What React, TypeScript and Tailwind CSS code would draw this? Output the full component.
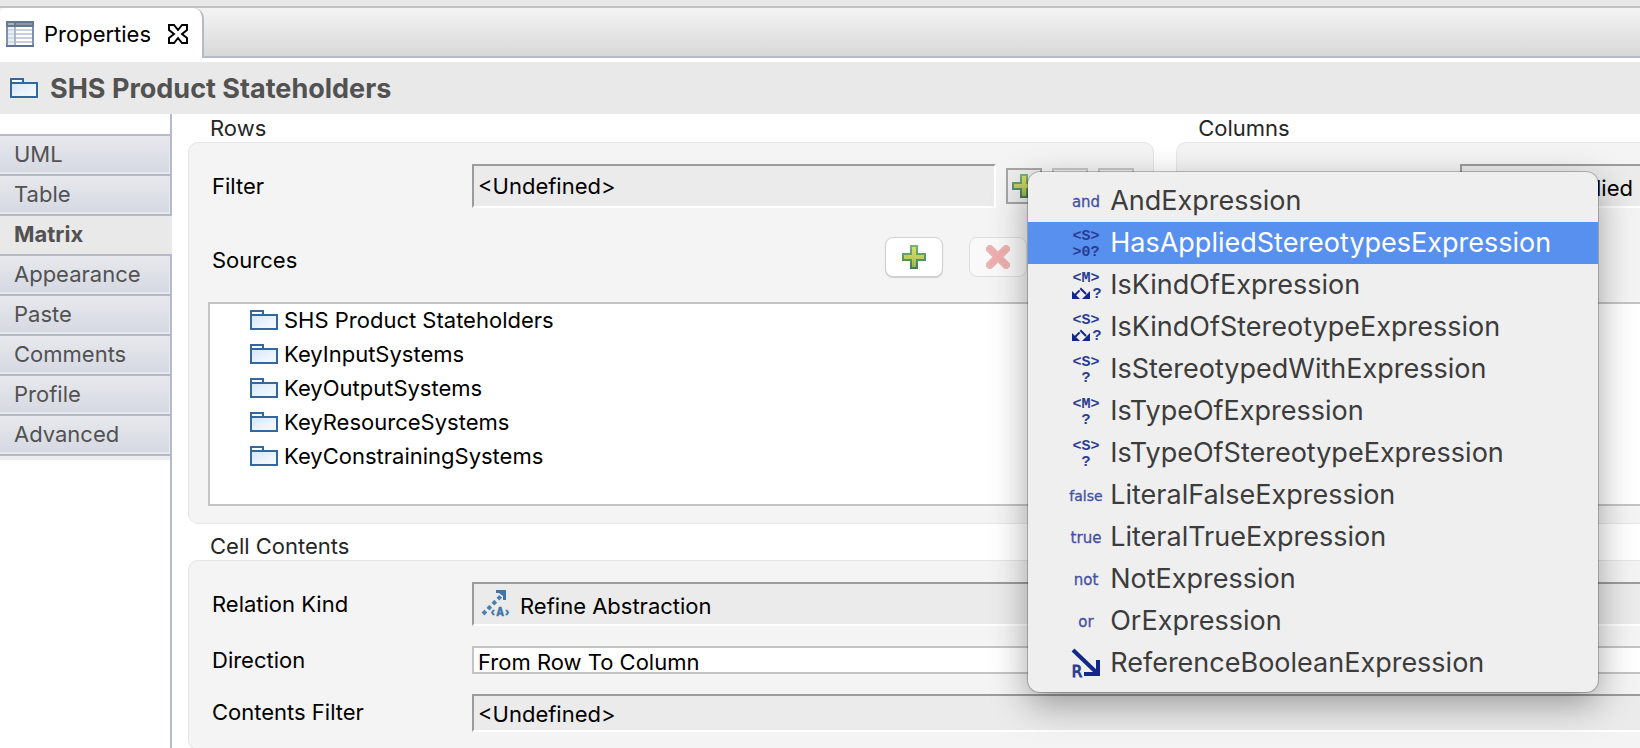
import React from "react";

const FolderIcon = () => (
  <svg width="28" height="20" viewBox="0 0 28 20" className="shrink-0" aria-hidden="true">
    <defs>
      <linearGradient id="folder" x1="0" y1="0" x2="1" y2="1">
        <stop offset="0" stopColor="#d3e6f4" />
        <stop offset="0.6" stopColor="#edf4fd" />
        <stop offset="1" stopColor="#f4f9ff" />
      </linearGradient>
    </defs>
    <path d="M1 5V1H13V5" fill="#fff" stroke="#31689f" strokeWidth="2" />
    <rect x="1" y="5" width="26" height="14" fill="url(#folder)" stroke="#31689f" strokeWidth="2" />
  </svg>
);

const PropertiesIcon = () => (
  <svg width="28" height="26" viewBox="0 0 28 26" className="shrink-0" aria-hidden="true">
    <rect x="1" y="1" width="26" height="24" fill="#fff" stroke="#8090ad" strokeWidth="2" />
    <rect x="0" y="0" width="28" height="6" fill="#66788f" />
    <rect x="2" y="2" width="6" height="2" fill="#a5b2c3" />
    <rect x="10" y="2" width="16" height="2" fill="#8496ad" />
    {[8, 12, 16, 20].map((y) => (
      <rect key={y} x="2" y={y} width="24" height="2" fill="#c9cfdc" />
    ))}
    <rect x="2" y="6" width="6" height="18" fill="#dbe2ec" fillOpacity="0.6" />
    <rect x="8" y="6" width="2" height="18" fill="#a9b6cc" />
    <rect x="0" y="24" width="28" height="2" fill="#5f7193" />
  </svg>
);

const CloseIcon = () => (
  <svg width="20" height="20" viewBox="0 0 20 20" aria-hidden="true">
    <path
      d="M1 1H6L10 6L14 1H19V6L14 10L19 14V19H14L10 14L6 19H1V14L6 10L1 6Z"
      fill="#fff"
      stroke="#000"
      strokeWidth="2"
    />
  </svg>
);

const PlusIcon = () => (
  <svg width="24" height="24" viewBox="0 0 24 24" aria-hidden="true">
    <defs>
      <linearGradient id="plusFill" x1="0" y1="0" x2="0" y2="1">
        <stop offset="0" stopColor="#d9dc6e" />
        <stop offset="0.5" stopColor="#c3cf5c" />
        <stop offset="1" stopColor="#8fb54e" />
      </linearGradient>
      <linearGradient id="plusEdge" x1="0" y1="0" x2="0" y2="1">
        <stop offset="0" stopColor="#72b576" />
        <stop offset="1" stopColor="#447a58" />
      </linearGradient>
    </defs>
    <path d="M9 1H15V9H23V15H15V23H9V15H1V9H9Z" fill="url(#plusFill)" stroke="url(#plusEdge)" strokeWidth="2" />
  </svg>
);

const DeleteIcon = () => (
  <svg width="24" height="24" viewBox="0 0 24 24" aria-hidden="true">
    <path d="M4 4L20 20M20 4L4 20" stroke="#eab4b4" strokeWidth="8" strokeLinecap="round" />
    <path d="M5 5L19 19M19 5L5 19" stroke="#efadad" strokeWidth="4" strokeLinecap="round" />
  </svg>
);

const RefineIcon = () => (
  <svg width="30" height="32" viewBox="0 0 30 32" className="shrink-0" aria-hidden="true">
    <path d="M3 26L22 7" stroke="#4a80b0" strokeWidth="4" strokeDasharray="4 3" strokeLinecap="butt" fill="none" />
    <path d="M16 2H26V12H23V8L19 5H16Z" fill="#3d76a8" />
    <text
      x="20"
      y="28"
      textAnchor="middle"
      fontFamily="Liberation Mono, monospace"
      fontWeight="700"
      fontSize="12"
      fill="#3d76a8"
      stroke="#3d76a8"
      strokeWidth="0.5"
    >
      ‹A›
    </text>
  </svg>
);

type Glyph = { top?: string; bottom?: string; word?: string; arrows?: boolean; reference?: boolean };

const mono = {
  textAnchor: "middle",
  fontFamily: "Liberation Mono, monospace",
  fontWeight: 700,
  fontSize: 15,
  fill: "#2a3c92",
} as const;

const ExpressionIcon = ({ top, bottom, word, arrows, reference }: Glyph) => (
  <svg width="34" height="36" viewBox="0 0 34 36" className="shrink-0 overflow-visible" aria-hidden="true">
    {word && (
      <text
        x="17"
        y="24"
        textAnchor="middle"
        fontFamily="DejaVu Sans, sans-serif"
        fontSize={word === "false" ? 14 : 15}
        fill="#4450a2"
        stroke="#4450a2"
        strokeWidth="0.3"
      >
        {word}
      </text>
    )}
    {top && (
      <text x="17" y="15" {...mono}>
        {top}
      </text>
    )}
    {bottom && (
      <text x={arrows ? 28 : 17} y="31" {...mono}>
        {bottom}
      </text>
    )}
    {arrows && (
      <g>
        <path d="M5 29L12 22L19 29" stroke="#14288a" strokeWidth="2" strokeDasharray="8 1" fill="none" />
        <path d="M3 24V32H11ZM21 24V32H13Z" fill="#14288a" />
      </g>
    )}
    {reference && (
      <g>
        <path d="M4 5L27 27" stroke="#14288a" strokeWidth="4" />
        <path d="M29 15V29H15" stroke="#14288a" strokeWidth="4" fill="none" />
        <text x="8" y="32" textAnchor="middle" fontFamily="DejaVu Sans, sans-serif" fontSize="15" fill="#2a3c92" stroke="#2a3c92" strokeWidth="1">
          R
        </text>
      </g>
    )}
  </svg>
);

const MENU: { label: string; icon: Glyph }[] = [
  { label: "AndExpression", icon: { word: "and" } },
  { label: "HasAppliedStereotypesExpression", icon: { top: "<S>", bottom: ">0?" } },
  { label: "IsKindOfExpression", icon: { top: "<M>", bottom: "?", arrows: true } },
  { label: "IsKindOfStereotypeExpression", icon: { top: "<S>", bottom: "?", arrows: true } },
  { label: "IsStereotypedWithExpression", icon: { top: "<S>", bottom: "?" } },
  { label: "IsTypeOfExpression", icon: { top: "<M>", bottom: "?" } },
  { label: "IsTypeOfStereotypeExpression", icon: { top: "<S>", bottom: "?" } },
  { label: "LiteralFalseExpression", icon: { word: "false" } },
  { label: "LiteralTrueExpression", icon: { word: "true" } },
  { label: "NotExpression", icon: { word: "not" } },
  { label: "OrExpression", icon: { word: "or" } },
  { label: "ReferenceBooleanExpression", icon: { reference: true } },
];

const ExpressionMenu = () => (
  <div
    role="menu"
    className="absolute left-[22px] top-1 z-10 w-[570px] rounded-xl bg-[#efefef] py-2 shadow-[0_0_0_1px_rgba(0,0,0,0.22),0_12px_36px_rgba(0,0,0,0.36)]"
  >
    {MENU.map(({ label, icon }, i) => (
      <button
        key={label}
        role="menuitem"
        className={
          i === 1
            ? "flex h-[42px] w-full items-center gap-[7px] bg-[#5790ef] pl-[41px] text-left text-[27px] text-white"
            : "flex h-[42px] w-full items-center gap-[7px] pl-[41px] text-left text-[27px] text-[#3c3c3c]"
        }
      >
        <ExpressionIcon {...icon} />
        {label}
      </button>
    ))}
  </div>
);

const TABS = ["UML", "Table", "Matrix", "Appearance", "Paste", "Comments", "Profile", "Advanced"];

const Sidebar = () => (
  <nav className="flex w-[172px] shrink-0 flex-col text-[#525252]">
    <div className="h-5 border-r-2 border-[#b5bacb]" />
    {TABS.map((tab) =>
      tab === "Matrix" ? (
        <button key={tab} className="h-10 border-t-2 border-[#b5bacb] bg-[#e9e9e9] pb-0.5 pl-[14px] text-left font-bold">
          {tab}
        </button>
      ) : (
        <button
          key={tab}
          className="h-10 border-r-2 border-t-2 border-[#b5bacb] bg-linear-to-b from-[#e8e9ed] to-[#d5d8e2] pb-0.5 pl-[14px] text-left shadow-[inset_-1px_-2px_0_#e6e7ea]"
        >
          {tab}
        </button>
      )
    )}
    <div className="flex-1 border-r-2 border-t-2 border-[#b5bacb]">
      <div className="h-1 bg-[#ececec]" />
    </div>
  </nav>
);

const SOURCES = [
  "SHS Product Stateholders",
  "KeyInputSystems",
  "KeyOutputSystems",
  "KeyResourceSystems",
  "KeyConstrainingSystems",
];

export default function App() {
  return (
    <div className="flex h-screen flex-col overflow-hidden bg-white font-['Inter','Liberation_Sans',sans-serif] text-[22px] leading-7 text-black">
      <div className="h-2 shrink-0 border-b-2 border-[#c3c3bd] bg-[#e8e8e8]" />
      <div className="flex h-[50px] shrink-0 border-b-2 border-[#b5bacb] bg-linear-to-b from-[#f4f4f4] to-[#d8d8d8]">
        <div className="-mb-0.5 flex w-[204px] items-center gap-[10px] rounded-tl-md rounded-tr-[10px] border-r-2 border-[#b5bacb] bg-white pl-[6px] pt-0.5">
          <PropertiesIcon />
          <span>Properties</span>
          <button aria-label="Close" className="ml-auto mr-[14px]">
            <CloseIcon />
          </button>
        </div>
      </div>
      <header className="mt-1 flex h-[52px] shrink-0 items-center gap-3 bg-[#e9e9e9] pl-[10px]">
        <FolderIcon />
        <h1 className="pt-0.5 text-[27px] font-bold text-[#525252]">SHS Product Stateholders</h1>
      </header>

      <div className="flex min-h-0 flex-1">
        <Sidebar />
        <main className="ml-4 flex min-w-0 flex-1 flex-col">
          <div className="flex gap-[22px]">
            <section className="flex min-w-0 flex-[25] flex-col">
              <h2 className="pl-[22px] text-[#262626]">Rows</h2>
              <div className="flex h-[382px] flex-col rounded-[10px] border border-[#e6e6e6] bg-[#f4f4f4] px-[19px] pt-[21px]">
                <div className="flex h-11 items-center">
                  <label htmlFor="rows-filter" className="w-[264px] shrink-0 pl-1">
                    Filter
                  </label>
                  <input
                    id="rows-filter"
                    readOnly
                    defaultValue="<Undefined>"
                    className="h-11 min-w-0 flex-1 border-2 border-b-white border-l-[#9c9c9c] border-r-white border-t-[#9c9c9c] bg-[#ebebeb] pl-1 outline-none"
                  />
                  <div className="ml-[10px] flex gap-[10px]">
                    <div className="relative">
                      <button
                        aria-label="Add filter"
                        className="flex size-9 items-center justify-center border-2 border-[#a6a6a6] bg-[#ededed]"
                      >
                        <PlusIcon />
                      </button>
                      <ExpressionMenu />
                    </div>
                    <button aria-label="Edit filter" className="size-9 border-2 border-[#c6c6c6] bg-[#f0f0f0]" />
                    <button aria-label="Remove filter" className="size-9 border-2 border-[#c6c6c6] bg-[#f0f0f0]" />
                  </div>
                </div>
                <div className="mt-[29px] flex h-10 items-start pl-1">
                  <span className="flex-1 pt-[9px]">Sources</span>
                  <button
                    aria-label="Add source"
                    className="flex h-10 w-[58px] items-center justify-center rounded-lg border border-[#cfcfcf] bg-white shadow-[0_1px_1px_rgba(0,0,0,0.15)]"
                  >
                    <PlusIcon />
                  </button>
                  <button
                    aria-label="Remove source"
                    className="ml-[26px] mr-[107px] flex h-10 w-[58px] items-center justify-center rounded-lg border border-[#dedede] bg-[#f9f9f9]"
                  >
                    <DeleteIcon />
                  </button>
                </div>
                <ul className="mt-[25px] h-[204px] border-2 border-[#c4c4c4] bg-white pl-10">
                  {SOURCES.map((name) => (
                    <li key={name} className="flex h-[34px] items-center gap-[6px] pb-0.5">
                      <FolderIcon />
                      {name}
                    </li>
                  ))}
                </ul>
              </div>
            </section>

            <section className="flex min-w-0 flex-[12] flex-col">
              <h2 className="pl-[22px] text-[#262626]">Columns</h2>
              <div className="flex h-[382px] flex-col rounded-l-[10px] border border-r-0 border-[#e6e6e6] bg-[#f4f4f4] pl-[19px] pt-[21px]">
                <div className="ml-[264px] flex h-11 items-center justify-end border-y-2 border-l-2 border-b-white border-l-[#9c9c9c] border-t-[#9c9c9c] bg-[#ebebeb] pr-[7px] pt-1">
                  Applied
                </div>
                <div className="mt-[94px] h-[204px] border-y-2 border-l-2 border-[#c4c4c4] bg-white" />
              </div>
            </section>
          </div>

          <section className="mt-2 flex flex-col">
            <h2 className="pl-[22px] text-[#262626]">Cell Contents</h2>
            <div className="flex h-[190px] flex-col rounded-l-[10px] border border-r-0 border-[#e6e6e6] bg-[#f4f4f4] pl-[23px] pt-[21px]">
              <div className="flex h-11 items-center">
                <span className="w-[260px] shrink-0">Relation Kind</span>
                <div className="flex h-11 flex-1 items-center gap-[10px] border-y-2 border-l-2 border-b-white border-l-[#9c9c9c] border-t-[#9c9c9c] bg-[#ebebeb] pl-[6px]">
                  <RefineIcon />
                  <span className="pt-1">Refine Abstraction</span>
                </div>
              </div>
              <div className="mt-5 flex h-7 items-center">
                <label htmlFor="direction" className="w-[260px] shrink-0">
                  Direction
                </label>
                <input
                  id="direction"
                  defaultValue="From Row To Column"
                  className="h-7 min-w-0 flex-1 border-y-2 border-l-2 border-[#c4c4c4] bg-white pl-1 pt-1 outline-none"
                />
              </div>
              <div className="mt-5 flex h-[38px] items-start">
                <label htmlFor="contents-filter" className="w-[260px] shrink-0 pt-1">
                  Contents Filter
                </label>
                <input
                  id="contents-filter"
                  readOnly
                  defaultValue="<Undefined>"
                  className="h-[38px] min-w-0 flex-1 border-y-2 border-l-2 border-b-white border-l-[#9c9c9c] border-t-[#9c9c9c] bg-[#ebebeb] pl-1 pt-0.5 outline-none"
                />
              </div>
            </div>
          </section>
        </main>
      </div>
    </div>
  );
}
